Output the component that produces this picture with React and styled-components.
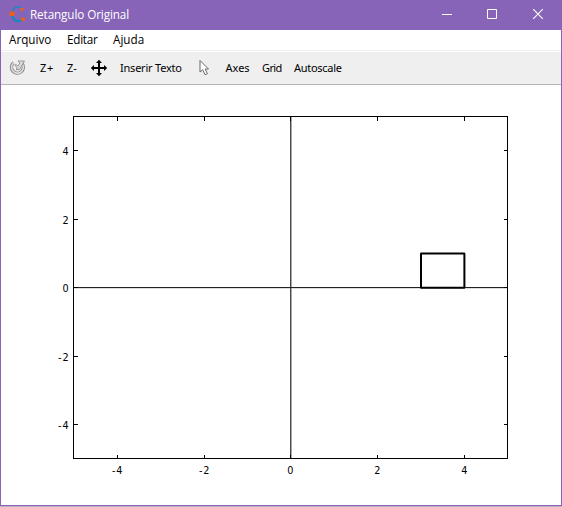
import React from "react";
import styled, { createGlobalStyle } from "styled-components";

const GlobalStyle = createGlobalStyle`
  * { box-sizing: border-box; }
  body { margin: 0; background: #fff; }
`;

const Window = styled.div`
  width: 562px;
  height: 507px;
  display: flex;
  flex-direction: column;
  background: #fff;
  border: solid #8764b8;
  border-width: 0 1px 0 1px;
`;

const TitleBar = styled.header`
  height: 30px;
  flex: none;
  margin: 0 -1px;
  padding-left: 8px;
  display: flex;
  align-items: center;
  background: #8764b8;
`;

const Title = styled.h1`
  margin: 0 auto 2px 4px;
  font: 400 11.7px/18px "Open Sans", sans-serif;
  letter-spacing: -0.1px;
  color: #fff;
`;

const CaptionButton = styled.button`
  width: 46px;
  height: 30px;
  padding: 0;
  border: 0;
  background: transparent;
  display: flex;
`;

const MenuBar = styled.nav`
  height: 21px;
  flex: none;
  display: flex;
  padding-left: 8px;
  border-bottom: 1px solid #f0f0f0;
`;

const MenuItem = styled.span`
  width: ${(p) => p.$width}px;
  font: 400 11.7px/18px "Open Sans", sans-serif;
  letter-spacing: ${(p) => p.$tracking || 0}px;
  color: #000;
  white-space: nowrap;
`;

const ToolBar = styled.div`
  height: 33px;
  flex: none;
  margin-top: 1px;
  display: flex;
  align-items: center;
  padding-left: 8px;
  background: #efefef;
  border-bottom: 1px solid #b4b4b4;
`;

const ToolLabel = styled.span`
  width: ${(p) => p.$width}px;
  font: 400 11px/16px "Noto Sans", sans-serif;
  letter-spacing: ${(p) => p.$tracking || 0}px;
  color: #000;
  white-space: nowrap;
`;

const ToolIcon = styled.span`
  width: ${(p) => p.$width}px;
  height: 32px;
  display: flex;
`;

const Canvas = styled.main`
  flex: 1;
  min-height: 0;
`;

const Plot = styled.svg`
  display: block;
  font: 9.7px "DejaVu Sans", sans-serif;
  letter-spacing: 0.9px;
`;

const BottomEdge = styled.div`
  height: 2px;
  flex: none;
  margin: 0 -1px;
  background: #b9b5bd;
  border-top: 1px solid #8764b8;
`;

const X_TICKS = [[-4, 117], [-2, 204], [0, 290], [2, 377], [4, 464]];
const Y_TICKS = [[4, 150], [2, 219], [0, 287], [-2, 356], [-4, 424]];

function OctaveLogo() {
  return (
    <svg width="18" height="30" viewBox="8 0 18 30">
      <path d="M12.300 11.500C13.500 8 16.500 5.500 21 7.500" fill="none" stroke="#1f86c0" strokeWidth="1.500" />
      <path d="M23.500 11C24.800 13 24.800 15.500 24 17.500" fill="none" stroke="#4a7dbd" strokeWidth="1" />
      <path d="M22 20.500C17.500 22.500 13.500 20 12 16" fill="none" stroke="#1689bd" strokeWidth="2.200" />
      <path d="M9.500 11.500h5v4.500h-5zM20.500 8h3v3h-3zM21.300 17.500h3.600v3.500h-3.600z" fill="#e8601c" />
    </svg>
  );
}

function RotateIcon() {
  return (
    <svg width="18" height="32" viewBox="9 52 18 32">
      <path d="M13.500 62.800A5.900 5.900 0 1 0 22 63.500" fill="none" stroke="#858585" strokeWidth="3.400" />
      <path d="M13.500 62.800A5.900 5.900 0 1 0 22 63.500" fill="none" stroke="#dedede" strokeWidth="1.700" />
      <path d="M18 61h6.500l-1.500 2.500-3 5.500-3.500 1 .3-2.500-2-2.500 1.500-.5 1.500 1.700 2-3.200z" fill="#dadada" stroke="#858585" strokeWidth=".8" />
    </svg>
  );
}

function PanIcon() {
  return (
    <svg width="18" height="32" viewBox="90 52 18 32">
      <path d="M98 62h2v5h5v2h-5v5h-2v-5h-5v-2h5z" />
      <path d="M99 59.800l3 3.200h-6zM99 76.200l3-3.200h-6zM90.800 68l3.200-3v6zM107.200 68l-3.200-3v6z" />
    </svg>
  );
}

function PointerIcon() {
  return (
    <svg width="18" height="32" viewBox="197 52 18 32">
      <path d="M200 60.500v11.500l2.700-2.300 2.300 5 2.400-1-2.200-4.700h3.300z" fill="#fff" stroke="#686868" />
    </svg>
  );
}

function Figure() {
  return (
    <Plot width="560" height="420" viewBox="1 85 560 420">
      <g shapeRendering="crispEdges">
        <path d="M74 288h434v1h-434z" fill="#ddd" />
        <path d="M291 117h1v341h-1z" fill="#aaa" />
        <path d="M290 117h1v341h-1z" fill="#484848" />
        <path d="M74 287h434v1h-434z" fill="#222" />
        <path d="M73.500 116.500h434v342h-434z" fill="none" stroke="#000" />
        {X_TICKS.map(([value, x]) => (
          <path key={value} d={`M${x + 0.5} 117v4M${x + 0.5} 455v4`} stroke="#000" />
        ))}
        {Y_TICKS.map(([value, y]) => (
          <path key={value} d={`M74 ${y + 0.5}h4M504 ${y + 0.5}h4`} stroke="#000" />
        ))}
      </g>
      <rect x="421" y="253.500" width="43.400" height="34.200" rx=".3" fill="none" stroke="#000" strokeWidth="2" />
      {X_TICKS.map(([value, x]) => (
        <text key={value} x={x + 0.7} y="474" textAnchor="middle">{value}</text>
      ))}
      {Y_TICKS.map(([value, y]) => (
        <text key={value} x="69.500" y={y + 5} textAnchor="end">{value}</text>
      ))}
    </Plot>
  );
}

export default function App() {
  return (
    <>
      <GlobalStyle />
      <Window>
        <TitleBar>
          <OctaveLogo />
          <Title>Retangulo Original</Title>
          <CaptionButton aria-label="Minimize">
            <svg width="46" height="30" viewBox="424 0 46 30"><path d="M442 14.500h10" stroke="#fff" /></svg>
          </CaptionButton>
          <CaptionButton aria-label="Maximize">
            <svg width="46" height="30" viewBox="470 0 46 30"><path d="M487.500 9.500h9v9h-9z" fill="none" stroke="#fff" /></svg>
          </CaptionButton>
          <CaptionButton aria-label="Close">
            <svg width="46" height="30" viewBox="516 0 46 30"><path d="M533.200 9.200l9.600 9.600M542.800 9.200l-9.600 9.600" stroke="#fff" strokeWidth="1.100" /></svg>
          </CaptionButton>
        </TitleBar>
        <MenuBar>
          <MenuItem $width={58}>Arquivo</MenuItem>
          <MenuItem $width={46} $tracking={-0.25}>Editar</MenuItem>
          <MenuItem $width={40}>Ajuda</MenuItem>
        </MenuBar>
        <ToolBar>
          <ToolIcon $width={31}><RotateIcon /></ToolIcon>
          <ToolLabel $width={27} $tracking={0.6}>Z+</ToolLabel>
          <ToolLabel $width={23}>Z-</ToolLabel>
          <ToolIcon $width={30}><PanIcon /></ToolIcon>
          <ToolLabel $width={77} $tracking={-0.22}>Inserir Texto</ToolLabel>
          <ToolIcon $width={28.5}><PointerIcon /></ToolIcon>
          <ToolLabel $width={36.5}>Axes</ToolLabel>
          <ToolLabel $width={32} $tracking={-0.6}>Grid</ToolLabel>
          <ToolLabel $width={60} $tracking={-0.28}>Autoscale</ToolLabel>
        </ToolBar>
        <Canvas><Figure /></Canvas>
        <BottomEdge />
      </Window>
    </>
  );
}
